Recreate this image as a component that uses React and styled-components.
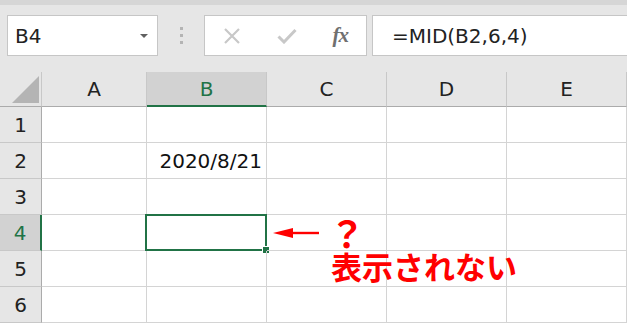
import styled, { createGlobalStyle } from "styled-components";

const GlobalStyle = createGlobalStyle`
  html, body {
    margin: 0;
    padding: 0;
    background: #fff;
  }
  body {
    font-family: "DejaVu Sans", "Noto Sans CJK JP", sans-serif;
  }
`;

const GREEN = "#217346";

const columns = ["A", "B", "C", "D", "E"];
const rows = [1, 2, 3, 4, 5, 6];
const active = { col: "B", row: 4 };
const values = { B2: "2020/8/21" };

const App = () => {
  return (
    <Page>
      <GlobalStyle />
      <TopStrip />
      <Toolbar>
        <NameBox>
          <span>B4</span>
          <DropArrow />
        </NameBox>
        <Grip>
          <i />
          <i />
          <i />
        </Grip>
        <ButtonsBox>
          <svg width="18" height="16" viewBox="0 0 18 16">
            <path d="M2 1 L16 15 M16 1 L2 15" stroke="#c8c8c8" strokeWidth="2.2" fill="none" />
          </svg>
          <svg width="20" height="16" viewBox="0 0 20 16">
            <path d="M1.5 8.5 L7 14 L18.5 2" stroke="#c8c8c8" strokeWidth="3" fill="none" />
          </svg>
          <Fx>fx</Fx>
        </ButtonsBox>
        <FormulaInput>=MID(B2,6,4)</FormulaInput>
      </Toolbar>

      <Sheet>
        <Corner />
        {columns.map((c) => (
          <ColHeader key={c} $active={c === active.col}>
            {c}
          </ColHeader>
        ))}
        {rows.map((r) => (
          <Row key={r}>
            <RowHeader $active={r === active.row}>{r}</RowHeader>
            {columns.map((c) => {
              const id = c + r;
              const selected = c === active.col && r === active.row;
              return (
                <Cell key={id}>
                  {values[id]}
                  {selected && (
                    <Selection>
                      <FillHandle />
                    </Selection>
                  )}
                </Cell>
              );
            })}
          </Row>
        ))}
      </Sheet>

      <Callout>
        <svg width="48" height="12" viewBox="0 0 48 12">
          <path d="M0 6 L20 1 L20 11 Z" fill="#ff0000" />
          <path d="M18 6 L46 6" stroke="#ff0000" strokeWidth="2.4" />
        </svg>
        <Question>？</Question>
        <Note>表示されない</Note>
      </Callout>
    </Page>
  );
};

const Page = styled.div`
  position: relative;
  width: 627px;
  height: 324px;
  overflow: hidden;
  background: #fff;
`;

const TopStrip = styled.div`
  height: 5px;
  background: #d6d6d6;
`;

const Toolbar = styled.div`
  display: flex;
  align-items: flex-start;
  height: 67px;
  box-sizing: border-box;
  padding: 10px 0 0 7px;
  background: #e6e6e6;
`;

const Box = styled.div`
  display: flex;
  align-items: center;
  height: 41px;
  box-sizing: border-box;
  background: #fff;
  border: 1px solid #c6c6c6;
`;

const NameBox = styled(Box)`
  width: 151px;
  justify-content: space-between;
  padding: 0 9px 0 7px;
  font-size: 20px;
  color: #222;
`;

const DropArrow = styled.span`
  width: 0;
  height: 0;
  border-left: 4px solid transparent;
  border-right: 4px solid transparent;
  border-top: 4px solid #606060;
`;

const Grip = styled.div`
  width: 46px;
  height: 41px;
  display: flex;
  flex-direction: column;
  align-items: center;
  justify-content: center;
  gap: 4px;
  i {
    display: block;
    width: 3px;
    height: 3px;
    background: #b4b4b4;
  }
`;

const ButtonsBox = styled(Box)`
  width: 163px;
  padding: 0 18px 0 18px;
  justify-content: space-between;
`;

const Fx = styled.span`
  font-family: "Liberation Serif", "DejaVu Serif", serif;
  font-style: italic;
  font-weight: bold;
  font-size: 21px;
  color: #707070;
  letter-spacing: -1px;
`;

const FormulaInput = styled(Box)`
  flex: 1;
  margin: 0 -10px 0 5px;
  padding-left: 19px;
  font-size: 20px;
  color: #222;
`;

const Sheet = styled.div`
  display: grid;
  grid-template-columns: 42px 105px repeat(4, 120px);
  grid-template-rows: 35px repeat(6, 36px);
  font-size: 20px;
`;

const Row = styled.div`
  display: contents;
`;

const Corner = styled.div`
  position: relative;
  background: #e6e6e6;
  border-right: 1px solid #c8c8c8;
  border-bottom: 1px solid #ababab;
  &::after {
    content: "";
    position: absolute;
    right: 2px;
    bottom: 3px;
    border-style: solid;
    border-width: 0 0 27px 27px;
    border-color: transparent transparent #b4b4b4 transparent;
  }
`;

const ColHeader = styled.div`
  display: flex;
  align-items: center;
  justify-content: center;
  box-sizing: border-box;
  background: ${(p) => (p.$active ? "#d2d2d2" : "#e6e6e6")};
  color: ${(p) => (p.$active ? GREEN : "#222")};
  border-right: 1px solid #c8c8c8;
  border-bottom: ${(p) => (p.$active ? `2px solid ${GREEN}` : "1px solid #ababab")};
`;

const RowHeader = styled.div`
  display: flex;
  align-items: center;
  justify-content: center;
  box-sizing: border-box;
  background: ${(p) => (p.$active ? "#d2d2d2" : "#e6e6e6")};
  color: ${(p) => (p.$active ? GREEN : "#222")};
  border-bottom: 1px solid #c8c8c8;
  border-right: ${(p) => (p.$active ? `2px solid ${GREEN}` : "1px solid #ababab")};
`;

const Cell = styled.div`
  position: relative;
  display: flex;
  align-items: center;
  justify-content: flex-end;
  box-sizing: border-box;
  padding-right: 4px;
  color: #111;
  border-right: 1px solid #d4d4d4;
  border-bottom: 1px solid #d4d4d4;
`;

const Selection = styled.div`
  position: absolute;
  top: -1px;
  left: -2px;
  right: -1px;
  bottom: -1px;
  border: 2px solid ${GREEN};
`;

const FillHandle = styled.div`
  position: absolute;
  right: -5px;
  bottom: -5px;
  width: 6px;
  height: 6px;
  background: ${GREEN};
  border: 1px solid #fff;
`;

const Callout = styled.div`
  position: absolute;
  left: 272px;
  top: 214px;
  width: 260px;
  height: 80px;
  color: #ff0000;
  font-family: "Noto Sans CJK JP", sans-serif;
  font-weight: bold;
  svg {
    position: absolute;
    left: 1px;
    top: 13px;
  }
`;

const Question = styled.span`
  position: absolute;
  left: 57px;
  top: 2px;
  font-size: 36px;
  line-height: 32px;
`;

const Note = styled.span`
  position: absolute;
  left: 59px;
  top: 36px;
  font-size: 31px;
  line-height: 31px;
  white-space: nowrap;
`;

export default App;
